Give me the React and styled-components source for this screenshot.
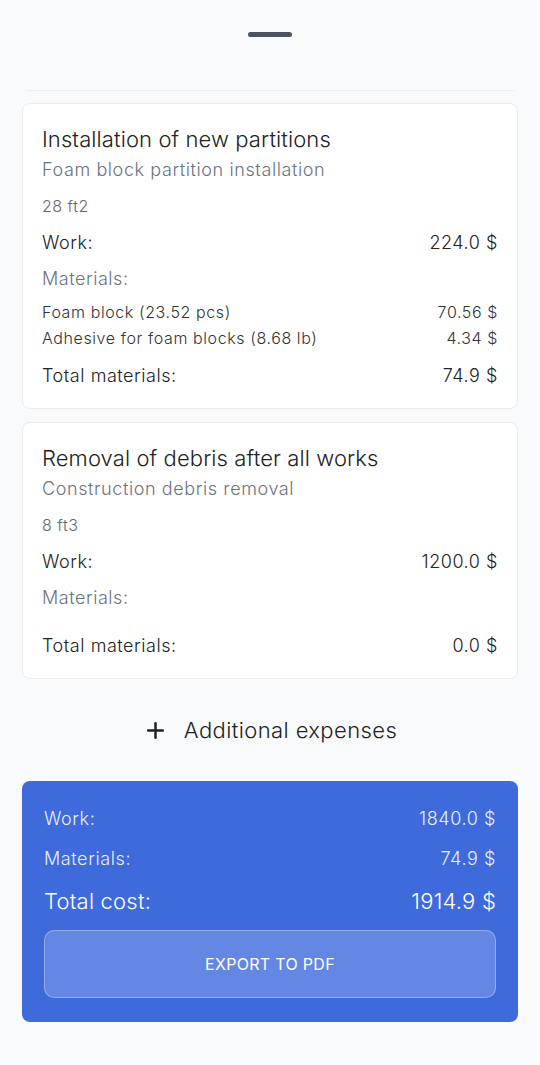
import React from "react";
import styled, { createGlobalStyle } from "styled-components";
import { Plus } from "lucide-react";

const GlobalStyle = createGlobalStyle`
  html, body {
    margin: 0;
    padding: 0;
    background: #f9fafb;
  }
  body {
    font-family: Inter, "Noto Sans", sans-serif;
    font-weight: 300;
    color: #222;
  }
  * { box-sizing: border-box; }
`;

const services = [
  {
    title: "Installation of new partitions",
    subtitle: "Foam block partition installation",
    amount: "28 ft2",
    work: "224.0 $",
    materials: [
      { name: "Foam block (23.52 pcs)", price: "70.56 $" },
      { name: "Adhesive for foam blocks (8.68 lb)", price: "4.34 $" },
    ],
    totalMaterials: "74.9 $",
  },
  {
    title: "Removal of debris after all works",
    subtitle: "Construction debris removal",
    amount: "8 ft3",
    work: "1200.0 $",
    materials: [],
    totalMaterials: "0.0 $",
  },
];

function App() {
  return (
    <>
      <GlobalStyle />
      <Sheet>
        <Handle />
        <Divider />

        <Cards>
          {services.map((s) => (
            <Card key={s.title}>
              <Title>{s.title}</Title>
              <Subtitle>{s.subtitle}</Subtitle>
              <Amount>{s.amount}</Amount>
              <Row $top={15}>
                <span>Work:</span>
                <span>{s.work}</span>
              </Row>
              <Label>Materials:</Label>
              <MaterialList>
                {s.materials.map((m) => (
                  <MaterialItem key={m.name}>
                    <span>{m.name}</span>
                    <span>{m.price}</span>
                  </MaterialItem>
                ))}
              </MaterialList>
              <Row $top={15}>
                <span>Total materials:</span>
                <span>{s.totalMaterials}</span>
              </Row>
            </Card>
          ))}
        </Cards>

        <AddButton>
          <Plus size={25} strokeWidth={2.4} color="#222" />
          Additional expenses
        </AddButton>

        <Summary>
          <SumRow>
            <span>Work:</span>
            <span>1840.0 $</span>
          </SumRow>
          <SumRow>
            <span>Materials:</span>
            <span>74.9 $</span>
          </SumRow>
          <SumRow $big>
            <span>Total cost:</span>
            <span>1914.9 $</span>
          </SumRow>
          <ExportButton>EXPORT TO PDF</ExportButton>
        </Summary>
      </Sheet>
    </>
  );
}

const Sheet = styled.div`
  padding: 32px 22px 40px;
  display: flex;
  flex-direction: column;
`;

const Handle = styled.div`
  align-self: center;
  width: 44px;
  height: 5px;
  border-radius: 3px;
  background: #4b5260;
`;

const Divider = styled.div`
  height: 1px;
  background: #eceef1;
  margin: 53px 4px 0;
`;

const Cards = styled.div`
  margin-top: 12px;
  display: flex;
  flex-direction: column;
  gap: 13px;
`;

const Card = styled.div`
  background: #fff;
  border: 1px solid #ececee;
  border-radius: 8px;
  padding: 21px 19px 20px;
  display: flex;
  flex-direction: column;
`;

const Title = styled.div`
  font-size: 22px;
  line-height: 28px;
  letter-spacing: 0.1px;
  color: #222;
`;

const Subtitle = styled.div`
  margin-top: 5px;
  font-size: 18px;
  line-height: 24px;
  letter-spacing: 0.6px;
  color: #6b7280;
`;

const Amount = styled.div`
  margin-top: 14px;
  font-size: 16px;
  line-height: 20px;
  letter-spacing: 0.5px;
  color: #666;
`;

const Row = styled.div`
  margin-top: ${(p) => p.$top}px;
  display: flex;
  justify-content: space-between;
  font-size: 18px;
  line-height: 24px;
  letter-spacing: 0.55px;
  color: #222;
`;

const Label = styled.div`
  margin-top: 12px;
  font-size: 18px;
  line-height: 24px;
  letter-spacing: 0.55px;
  color: #6b7280;
`;

const MaterialList = styled.div`
  padding-top: 10px;
  display: flex;
  flex-direction: column;
  gap: 4px;

  &:empty {
    padding-top: 9px;
  }
`;

const MaterialItem = styled.div`
  display: flex;
  justify-content: space-between;
  font-size: 16px;
  line-height: 22px;
  letter-spacing: 0.6px;
  color: #333;
`;

const AddButton = styled.button`
  margin-top: 29px;
  height: 44px;
  align-self: center;
  display: flex;
  align-items: center;
  gap: 16px;
  border: none;
  background: none;
  padding: 0;
  font-family: inherit;
  font-weight: 300;
  font-size: 22px;
  letter-spacing: 0.4px;
  color: #222;
  cursor: pointer;
`;

const Summary = styled.div`
  margin-top: 29px;
  background: #3e6adc;
  border-radius: 8px;
  padding: 26px 22px 24px;
  display: flex;
  flex-direction: column;
  gap: 16px;
  color: #fff;
`;

const SumRow = styled.div`
  display: flex;
  justify-content: space-between;
  font-size: ${(p) => (p.$big ? 22 : 18)}px;
  line-height: ${(p) => (p.$big ? 28 : 24)}px;
  letter-spacing: ${(p) => (p.$big ? 0.2 : 0.6)}px;
  color: ${(p) => (p.$big ? "#fff" : "rgba(255, 255, 255, 0.92)")};
`;

const ExportButton = styled.button`
  margin-top: -1px;
  height: 68px;
  border-radius: 10px;
  border: 1px solid rgba(255, 255, 255, 0.3);
  background: rgba(255, 255, 255, 0.2);
  color: #fff;
  font-family: inherit;
  font-weight: 400;
  font-size: 16px;
  letter-spacing: 0.3px;
  cursor: pointer;
`;

export default App;
